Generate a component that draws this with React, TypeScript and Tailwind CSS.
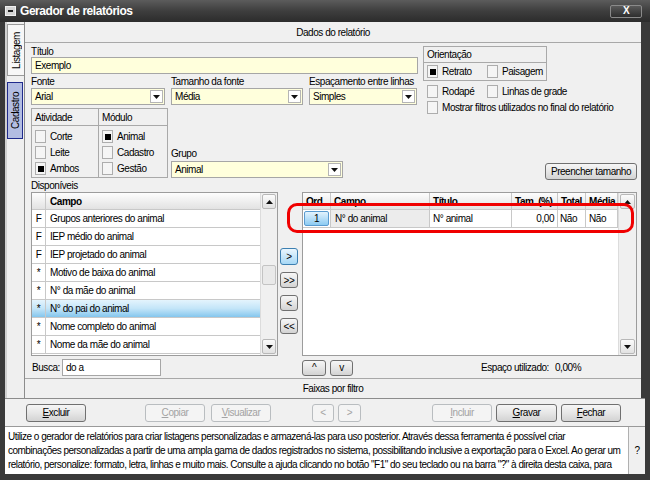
import React from 'react'

const FONT = "font-['Liberation_Sans',Arial,sans-serif] tracking-[-0.45px]"

function Tri({ up }: { up?: boolean }) {
  return (
    <svg width="7" height="4" viewBox="0 0 7 4">
      {up ? <path d="M0 4h7L3.5 0z" fill="#111" /> : <path d="M0 0h7L3.5 4z" fill="#111" />}
    </svg>
  )
}

function Check({ checked, label }: { checked?: boolean; label: string }) {
  return (
    <div className="flex h-[15px] items-center gap-[4px]">
      <span className="flex h-[13px] w-[11px] shrink-0 items-center justify-center border border-[#adadad] bg-[#f5f5f5]">
        {checked && <span className="h-[6px] w-[6px] bg-black" />}
      </span>
      <span>{label}</span>
    </div>
  )
}

function Combo({ value, w }: { value: string; w: string }) {
  return (
    <div className={`flex h-[17px] items-center border border-[#a6a6a6] bg-[#ffffdc] pl-[3px] ${w}`}>
      <span className="flex-1">{value}</span>
      <span className="mr-[1px] flex h-[13px] w-[13px] items-center justify-center border border-[#b5b5b5] bg-white">
        <Tri />
      </span>
    </div>
  )
}

function Btn({
  children,
  disabled,
  blue,
  className = '',
}: {
  children: React.ReactNode
  disabled?: boolean
  blue?: boolean
  className?: string
}) {
  const look = disabled
    ? 'border-[#b9bdc0] bg-[#f4f4f4] text-[#a3a3a3]'
    : blue
      ? 'border-[#3c7fb1] bg-gradient-to-b from-[#eaf6fd] to-[#a7d8f6] text-black'
      : 'border-[#707070] bg-gradient-to-b from-[#f6f6f6] via-[#e6e6e6] to-[#d3d3d3] text-black'
  return (
    <div className={`flex items-center justify-center rounded-[3px] border ${look} ${className}`}>
      {children}
    </div>
  )
}

function ScrollBtn({ up }: { up?: boolean }) {
  return (
    <div className="mx-[1px] flex h-[15px] items-center justify-center rounded-[2px] border border-[#b8b8b8] bg-gradient-to-b from-[#fbfbfb] to-[#e2e2e2]">
      <Tri up={up} />
    </div>
  )
}

const available = [
  ['F', 'Grupos anteriores do animal'],
  ['F', 'IEP médio do animal'],
  ['F', 'IEP projetado do animal'],
  ['*', 'Motivo de baixa do animal'],
  ['*', 'N° da mãe do animal'],
  ['*', 'N° do pai do animal'],
  ['*', 'Nome completo do animal'],
  ['*', 'Nome da mãe do animal'],
]

function Available() {
  return (
    <div className="flex h-[164px] w-[247px] border border-[#9c9c9c] bg-white">
      <div className="flex flex-1 flex-col">
        <div className="flex h-[17px] border-b border-[#c8c8c8] bg-gradient-to-b from-[#fdfdfd] to-[#e2e2e2] font-bold">
          <div className="w-[14px] border-r border-[#c8c8c8]" />
          <div className="pl-[4px] leading-[17px]">Campo</div>
        </div>
        {available.map(([k, name], i) => (
          <div
            key={name}
            className={`flex h-[18px] border-b border-[#c8c8c8] leading-[17px] ${
              i === 5 ? 'bg-gradient-to-b from-[#e4f4fd] via-[#c3e5f8] to-[#84c6ed]' : ''
            }`}
          >
            <div className="w-[14px] border-r border-[#c8c8c8] text-center">{k}</div>
            <div className="pl-[4px]">{name}</div>
          </div>
        ))}
      </div>
      <div className="flex w-[17px] flex-col border-l border-[#dcdcdc] bg-[#f0f0f0] py-[1px]">
        <ScrollBtn up />
        <div className="flex-1">
          <div className="mx-[1px] mt-[56px] h-[20px] rounded-[2px] border border-[#c3c3c3] bg-[#e9e9e9]" />
        </div>
        <ScrollBtn />
      </div>
    </div>
  )
}

function Selected() {
  const head = 'overflow-hidden border-r border-[#c8c8c8] pl-[3px] leading-[17px]'
  const cell = 'overflow-hidden border-r border-[#c8c8c8] leading-[17px]'
  return (
    <div className="flex h-[164px] w-[335px] border border-[#9c9c9c] bg-white">
      <div className="flex flex-1 flex-col">
        <div className="flex h-[17px] border-b border-[#c8c8c8] bg-gradient-to-b from-[#fdfdfd] to-[#e2e2e2] font-bold">
          <div className={`w-[28px] ${head}`}>Ord.</div>
          <div className={`w-[99px] ${head}`}>Campo</div>
          <div className={`w-[82px] ${head}`}>Título</div>
          <div className={`w-[46px] ${head}`}>Tam. (%)</div>
          <div className={`w-[28px] ${head}`}>Total</div>
          <div className={`w-[32px] ${head}`}>Média</div>
        </div>
        <div className="flex h-[18px] border-b border-[#c8c8c8]">
          <div className="w-[28px] border-r border-[#c8c8c8] p-[1px]">
            <div className="h-full rounded-[2px] border border-[#5a9bd0] bg-gradient-to-b from-[#e3f3fd] to-[#8ccbf2] text-center leading-[13px]">
              1
            </div>
          </div>
          <div className={`w-[99px] bg-[#ececec] pl-[4px] ${cell}`}>N° do animal</div>
          <div className={`w-[82px] pl-[3px] ${cell}`}>N° animal</div>
          <div className={`w-[46px] pr-[3px] text-right ${cell}`}>0,00</div>
          <div className={`w-[28px] pl-[2px] ${cell}`}>Não</div>
          <div className={`w-[32px] pl-[3px] ${cell}`}>Não</div>
        </div>
      </div>
      <div className="flex w-[18px] flex-col border-l border-[#dcdcdc] bg-[#f0f0f0] py-[1px]">
        <ScrollBtn up />
        <div className="flex-1" />
        <ScrollBtn />
      </div>
    </div>
  )
}

function Underlined({ text }: { text: string }) {
  return (
    <span>
      <span className="underline">{text[0]}</span>
      {text.slice(1)}
    </span>
  )
}

export default function App() {
  return (
    <div className={`flex h-[480px] w-[650px] flex-col whitespace-nowrap bg-[#3a3a3a] text-[10px] text-black ${FONT}`}>
      {/* title bar */}
      <div className="flex h-[22px] items-center bg-gradient-to-b from-[#5c5c5c] via-[#3e3e3e] to-[#2c2c2c]">
        <span className="ml-[5px] flex h-[10px] w-[11px] items-center justify-center border border-[#f0f0f0] bg-[#d6d6d6]">
          <span className="h-[2px] w-[5px] bg-[#222]" />
        </span>
        <span className="ml-[4px] text-[12px] font-bold text-white">Gerador de relatórios</span>
        <div className="ml-auto mr-[8px] flex h-[13px] w-[32px] items-center justify-center rounded-[2px] border border-[#8a8a8a] bg-gradient-to-b from-[#5a5a5a] to-[#2e2e2e] text-[10px] font-bold leading-none text-white">
          X
        </div>
      </div>

      <div className="flex flex-1 flex-col px-[5px] pb-[6px]">
        {/* top section */}
        <div className="flex h-[376px]">
          {/* tab strip */}
          <div className="flex w-[19px] flex-col border-l-2 border-[#d0d0d0] bg-[#efefef] pt-[2px]">
            <div className="flex h-[52px] items-center justify-center border-y border-l border-[#9a9a9a] bg-[#f7f7f7]">
              <span className="rotate-180 [writing-mode:vertical-rl]">Listagem</span>
            </div>
            <div className="mt-[6px] flex h-[57px] w-[16px] items-center justify-center border border-[#1f2a8c] bg-[#b3bde2]">
              <span className="rotate-180 [writing-mode:vertical-rl]">Cadastro</span>
            </div>
          </div>

          {/* main panel */}
          <div className="flex flex-1 flex-col border-l border-[#8c8c8c] bg-[#f0f0f0]">
            <div className="flex h-[21px] items-center justify-center border-b border-[#a8a8a8] pt-[1px]">
              Dados do relatório
            </div>

            <div className="relative flex h-[335px] flex-col pl-[6px] pr-[4px]">
              {/* upper form */}
              <div className="flex h-[135px]">
                <div className="flex w-[387px] flex-col">
                  <div className="h-[14px] leading-[17px]">Título</div>
                  <div className="h-[17px] border border-[#a6a6a6] bg-[#ffffdc] pl-[3px] leading-[15px]">Exemplo</div>
                  <div className="flex h-[14px] leading-[16px]">
                    <span className="w-[140px]">Fonte</span>
                    <span className="w-[138px]">Tamanho da fonte</span>
                    <span>Espaçamento entre linhas</span>
                  </div>
                  <div className="flex gap-[6px]">
                    <Combo value="Arial" w="w-[134px]" />
                    <Combo value="Média" w="w-[132px]" />
                    <Combo value="Simples" w="w-[108px]" />
                  </div>
                  <div className="mt-[3px] flex">
                    <div className="flex h-[70px] w-[137px] border border-[#a9a9a9]">
                      <div className="flex w-[67px] flex-col border-r border-[#a9a9a9]">
                        <div className="h-[17px] border-b border-[#a9a9a9] pl-[3px] leading-[18px]">Atividade</div>
                        <div className="flex flex-col gap-[1px] pl-[3px] pt-[3px]">
                          <Check label="Corte" />
                          <Check label="Leite" />
                          <Check checked label="Ambos" />
                        </div>
                      </div>
                      <div className="flex flex-1 flex-col">
                        <div className="h-[17px] border-b border-[#a9a9a9] pl-[3px] leading-[18px]">Módulo</div>
                        <div className="flex flex-col gap-[1px] pl-[3px] pt-[3px]">
                          <Check checked label="Animal" />
                          <Check label="Cadastro" />
                          <Check label="Gestão" />
                        </div>
                      </div>
                    </div>
                    <div className="ml-[3px] flex flex-col justify-end">
                      <div className="h-[15px] leading-[15px]">Grupo</div>
                      <Combo value="Animal" w="w-[172px]" />
                    </div>
                  </div>
                </div>

                <div className="ml-[5px] flex flex-1 flex-col">
                  <div className="mt-[3px] flex h-[35px] w-[124px] flex-col border border-[#a9a9a9]">
                    <div className="h-[16px] border-b border-[#a9a9a9] pl-[3px] leading-[16px]">Orientação</div>
                    <div className="flex items-center pl-[3px] pt-[1px]">
                      <div className="w-[60px]">
                        <Check checked label="Retrato" />
                      </div>
                      <Check label="Paisagem" />
                    </div>
                  </div>
                  <div className="mt-[3px] flex pl-[4px]">
                    <div className="w-[60px]">
                      <Check label="Rodapé" />
                    </div>
                    <Check label="Linhas de grade" />
                  </div>
                  <div className="mt-[1px] pl-[4px]">
                    <Check label="Mostrar filtros utilizados no final do relatório" />
                  </div>
                  <div className="mt-auto flex justify-end">
                    <Btn className="mb-[-2px] h-[17px] w-[92px]">Preencher tamanho</Btn>
                  </div>
                </div>
              </div>

              <div className="mt-[2px] h-[12px] leading-[12px]">Disponíveis</div>

              {/* grids */}
              <div className="flex">
                <Available />
                <div className="ml-[2px] flex w-[18px] flex-col gap-[7px] pt-[56px]">
                  <Btn blue className="h-[17px]">&gt;</Btn>
                  <Btn className="h-[16px]">&gt;&gt;</Btn>
                  <Btn className="h-[16px]">&lt;</Btn>
                  <Btn className="h-[16px]">&lt;&lt;</Btn>
                </div>
                <div className="ml-[4px]">
                  <Selected />
                </div>
              </div>

              {/* annotation */}
              <div className="absolute left-[262px] top-[160px] h-[30px] w-[347px] rounded-[10px] border-[3px] border-[#f00000]" />

              {/* busca row */}
              <div className="mt-[3px] flex h-[17px] items-center">
                <div className="flex w-[271px] items-center">
                  <span className="ml-[1px] w-[30px]">Busca:</span>
                  <div className="h-[17px] w-[99px] border border-[#a6a6a6] bg-white pl-[3px] leading-[15px]">do a</div>
                </div>
                <Btn className="h-[16px] w-[24px]">^</Btn>
                <Btn className="ml-[4px] h-[16px] w-[23px]">v</Btn>
                <span className="ml-[128px] w-[74px]">Espaço utilizado:</span>
                <span>0,00%</span>
              </div>
            </div>

            <div className="flex flex-1 items-center justify-center border-t border-[#a8a8a8]">Faixas por filtro</div>
          </div>
          <div className="w-[4px] bg-[#3a3a3a]" />
        </div>

        {/* button row */}
        <div className="flex h-[28px] items-center border-t border-[#8c8c8c] bg-[#f0f0f0]">
          <Btn className="ml-[21px] h-[18px] w-[60px]"><Underlined text="Excluir" /></Btn>
          <Btn disabled className="ml-[59px] h-[18px] w-[60px]"><Underlined text="Copiar" /></Btn>
          <Btn disabled className="ml-[6px] h-[18px] w-[60px]"><Underlined text="Visualizar" /></Btn>
          <Btn disabled className="ml-[41px] h-[18px] w-[22px]">&lt;</Btn>
          <Btn disabled className="ml-[4px] h-[18px] w-[23px]">&gt;</Btn>
          <Btn disabled className="ml-[71px] h-[18px] w-[60px]"><Underlined text="Incluir" /></Btn>
          <Btn className="ml-[4px] h-[18px] w-[61px]"><Underlined text="Gravar" /></Btn>
          <Btn className="ml-[4px] h-[18px] w-[60px]"><Underlined text="Fechar" /></Btn>
        </div>

        {/* help */}
        <div className="flex flex-1 border-t border-[#9a9a9a]">
          <div className="flex-1 overflow-hidden bg-white pl-[3px] pt-[3px] leading-[14px] tracking-[-0.52px]">
            <div>Utilize o gerador de relatórios para criar listagens personalizadas e armazená-las para uso posterior. Através dessa ferramenta é possível criar</div>
            <div>combinações personalizadas a partir de uma ampla gama de dados registrados no sistema, possibilitando inclusive a exportação para o Excel. Ao gerar um</div>
            <div>relatório, personalize: formato, letra, linhas e muito mais. Consulte a ajuda clicando no botão "F1" do seu teclado ou na barra "?" à direita desta caixa, para</div>
          </div>
          <div className="flex w-[17px] items-center justify-center border-l border-[#b0b0b0] bg-[#f0f0f0]">?</div>
        </div>
      </div>
    </div>
  )
}
